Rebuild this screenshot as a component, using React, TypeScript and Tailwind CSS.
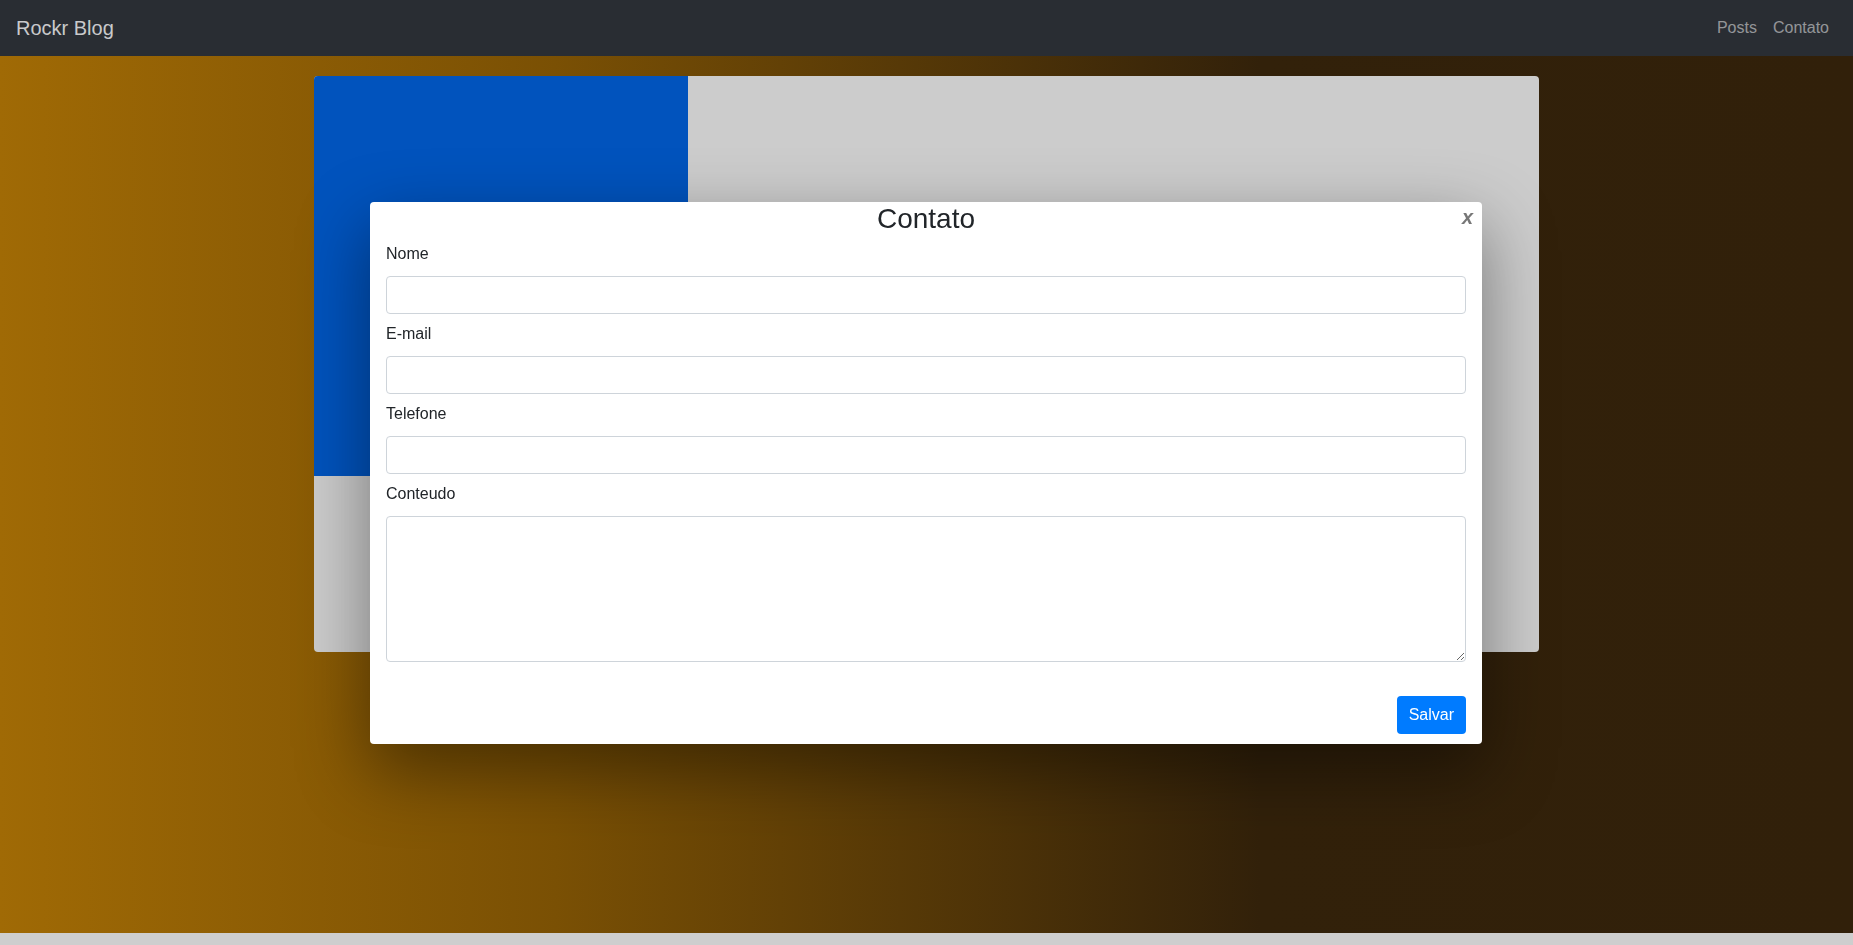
const fields = ["Nome", "E-mail", "Telefone"];

const ContactModal = () => {
  return (
    <div className="fixed inset-0 flex items-center justify-center">
      <div className="relative -ml-px w-[1112px] rounded-[4px] bg-white px-4 pb-[10px] text-[#212529] shadow-[0_26px_70px_2px_rgba(0,0,0,0.42)]">
        <h2 className="h-[40px] text-center text-[28px] leading-[1.2]">Contato</h2>
        <button className="absolute right-[9px] top-[5px] text-[20px] font-bold italic leading-none text-[#777]">
          x
        </button>

        {fields.map((label) => (
          <div key={label} className="mb-[8px]">
            <label className="mb-[10px] block text-base leading-6">{label}</label>
            <input
              type="text"
              className="block h-[38px] w-full rounded-[4px] border border-[#ced4da] bg-white px-3 outline-none"
            />
          </div>
        ))}

        <div>
          <label className="mb-[10px] block text-base leading-6">Conteudo</label>
          <textarea className="block h-[146px] w-full rounded-[4px] border border-[#ced4da] bg-white px-3 py-1.5 outline-none" />
        </div>

        <div className="mt-[34px] flex justify-end">
          <button className="h-[38px] rounded-[4px] bg-[#007bff] px-3 text-base text-white">
            Salvar
          </button>
        </div>
      </div>
    </div>
  );
};

export default function App() {
  return (
    <div className="min-h-screen bg-[#cecece] font-['Liberation_Sans',Arial,sans-serif]">
      <header className="flex h-[56px] items-center justify-between bg-[#292d33] px-4">
        <a href="#" className="text-[20px] text-white/75">
          Rockr Blog
        </a>
        <nav className="flex items-center text-base text-white/50">
          <a href="#" className="px-2">
            Posts
          </a>
          <a href="#" className="pl-2 pr-2">
            Contato
          </a>
        </nav>
      </header>

      <main className="h-[877px] bg-[linear-gradient(90deg,#a06a05_0%,#7a5004_30%,#32210a_68%,#31200a_100%)] pt-[20px]">
        <div className="mx-auto flex h-[576px] w-[1225px] items-start overflow-hidden rounded-[4px] bg-[#cccccc]">
          <div className="h-[400px] w-[374px] bg-[#0153bd]" />
        </div>
      </main>

      <ContactModal />
    </div>
  );
}
